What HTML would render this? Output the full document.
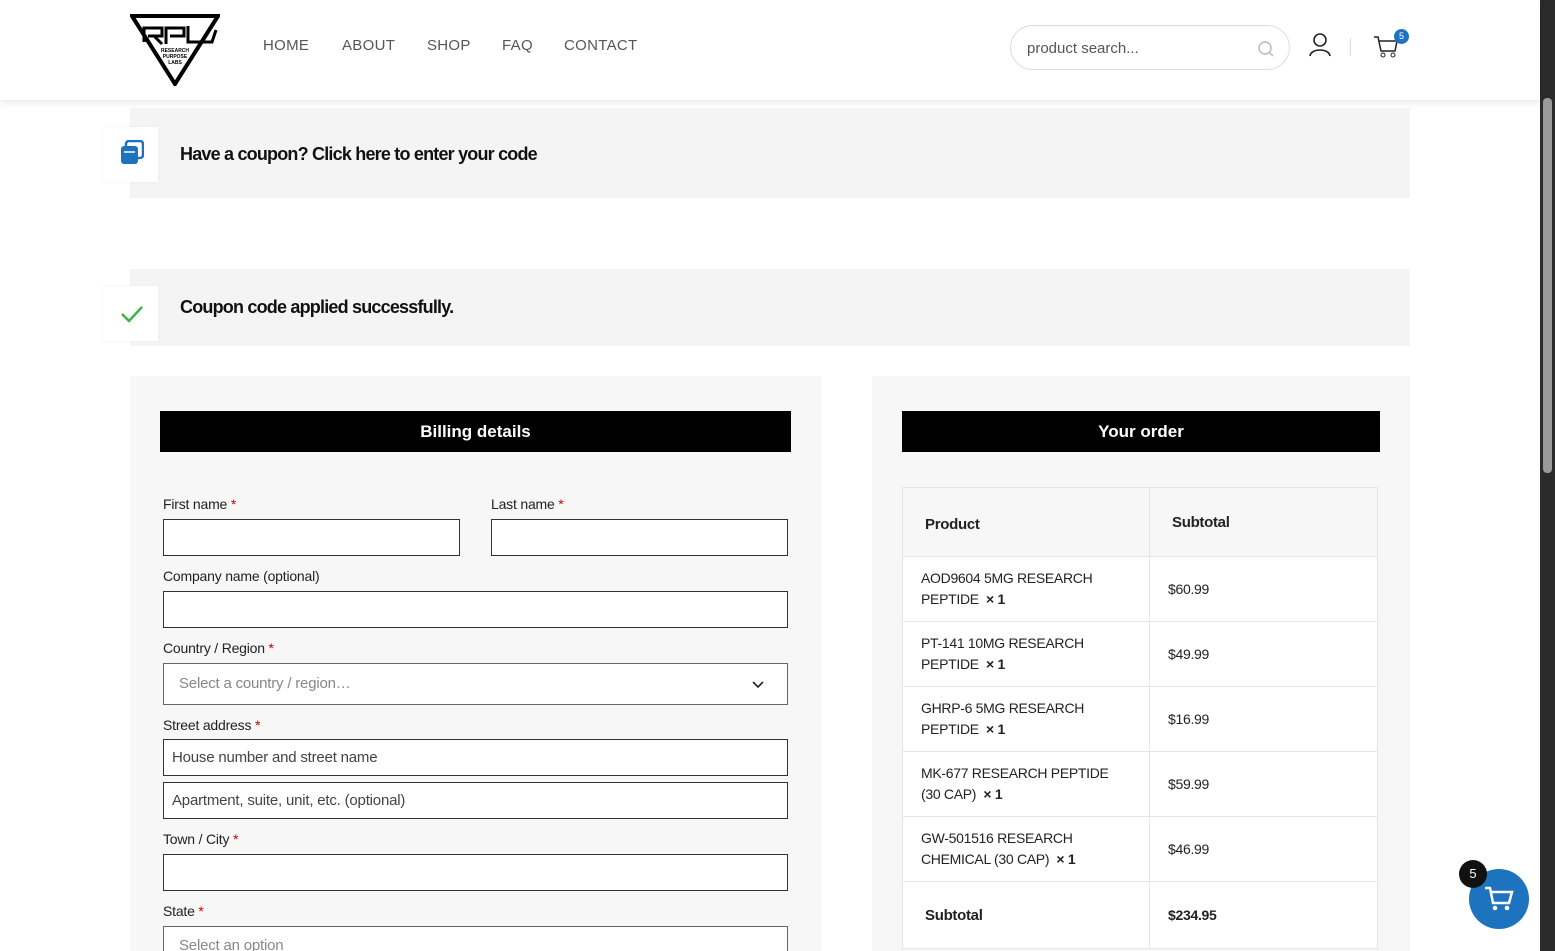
<!DOCTYPE html>
<html><head><style>
*{box-sizing:border-box;margin:0;padding:0}
html,body{width:1555px;height:951px;overflow:hidden}
body{background:#fff;font-family:"Liberation Sans",sans-serif;position:relative;color:#111}
.abs{position:absolute}
.hdr{left:0;top:0;width:1540px;height:100px;background:#fff;box-shadow:0 2px 8px rgba(0,0,0,.1);z-index:2}
.nav{top:37px;font-size:15px;color:#555;letter-spacing:.3px}
.sb{left:1540px;top:0;width:15px;height:951px;background:#2b2b2b}
.note{left:130px;width:1280px;background:#f4f4f4}
.ib{background:#fff;width:55px;height:55px;left:103px;box-shadow:0 0 3px rgba(0,0,0,.05)}
.nt{font-size:18px;font-weight:bold;letter-spacing:-.8px;color:#111}
.panel{background:#f7f7f7}
.bar{background:#000;color:#fff;font-weight:bold;font-size:17px;text-align:center;line-height:41px;height:41px}
.lab{font-size:14px;color:#222;letter-spacing:-.2px}
.lab b{color:#c00;font-weight:normal}
.inp{background:#fff;border:1px solid #333;height:37px;font-size:15px;color:#444;padding-left:8px;line-height:35px;letter-spacing:-.2px}
.tbl{left:902px;top:487px;width:476px;border:1px solid #e5e5e5;background:#fff}
.r{display:flex;border-top:1px solid #e5e5e5;height:65px;font-size:14px;color:#222;letter-spacing:-.3px}
.r div:first-child{width:247px;border-right:1px solid #e5e5e5;padding:11px 18px;line-height:21px}
.r div:last-child{padding-left:18px;display:flex;align-items:center}
</style></head><body>
<div class="abs hdr">
<svg class="abs" style="left:130px;top:14px" width="90" height="72" viewBox="0 0 90 72"><path d="M2 2H88L45 70Z" fill="none" stroke="#000" stroke-width="4"/><path d="M14 28V14H32V22H18M24 22L32 30M36 30V14H54V22H40M58 12V28H82L86 16" fill="none" stroke="#000" stroke-width="3"/><text x="45" y="38" font-size="5" text-anchor="middle" font-weight="bold">RESEARCH</text><text x="45" y="44" font-size="5" text-anchor="middle" font-weight="bold">PURPOSE</text><text x="45" y="50" font-size="5" text-anchor="middle" font-weight="bold">LABS</text></svg>
<div class="abs nav" style="left:263px">HOME</div>
<div class="abs nav" style="left:342px">ABOUT</div>
<div class="abs nav" style="left:427px">SHOP</div>
<div class="abs nav" style="left:502px">FAQ</div>
<div class="abs nav" style="left:564px">CONTACT</div>
<div class="abs" style="left:1010px;top:25px;width:280px;height:45px;border:1px solid #ddd;border-radius:23px;font-size:15px;color:#555;padding:14px 0 0 16px">product search...</div>
<svg class="abs" style="left:1257px;top:40px" width="18" height="18"><circle cx="8" cy="8" r="6" fill="none" stroke="#bbb" stroke-width="1.5"/><path d="M12 12L16 16" stroke="#bbb" stroke-width="1.5"/></svg>
<svg class="abs" style="left:1309px;top:33px" width="22" height="24"><circle cx="11" cy="7" r="6" fill="none" stroke="#222" stroke-width="1.6"/><path d="M1 23C2 15 20 15 21 23" fill="none" stroke="#222" stroke-width="1.6"/></svg>
<div class="abs" style="left:1350px;top:38px;width:1px;height:18px;background:#ddd"></div>
<svg class="abs" style="left:1373px;top:34px" width="26" height="24"><path d="M1 3H5L8 17H22L24 7H6" fill="none" stroke="#222" stroke-width="1.5"/><circle cx="10" cy="21" r="2" fill="none" stroke="#222"/><circle cx="20" cy="21" r="2" fill="none" stroke="#222"/></svg>
<div class="abs" style="left:1394px;top:29px;width:15px;height:15px;border-radius:50%;background:#1e73be;color:#fff;font-size:9px;text-align:center;line-height:15px">5</div>
</div>
<div class="abs sb"><div class="abs" style="left:3px;top:98px;width:9px;height:375px;background:#9a9a9a;border-radius:4px"></div></div>

<div class="abs note" style="top:108px;height:90px"></div>
<div class="abs ib" style="top:127px"><svg class="abs" style="left:17px;top:13px" width="24" height="26"><rect x="6" y="1" width="17" height="17" rx="3" fill="none" stroke="#1e73be" stroke-width="2.5"/><rect x="1" y="6" width="17" height="18" rx="3" fill="#1e73be"/><path d="M4 12H15" stroke="#fff" stroke-width="1.5"/></svg></div>
<div class="abs nt" style="left:180px;top:144px">Have a coupon? Click here to enter your code</div>

<div class="abs note" style="top:269px;height:77px"></div>
<div class="abs ib" style="top:286px"><svg class="abs" style="left:17px;top:18px" width="24" height="20"><path d="M2 10L9 17L22 3" fill="none" stroke="#3bb54a" stroke-width="2.5"/></svg></div>
<div class="abs nt" style="left:180px;top:297px">Coupon code applied successfully.</div>

<div class="abs panel" style="left:130px;top:376px;width:691px;height:575px"></div>
<div class="abs bar" style="left:160px;top:411px;width:631px">Billing details</div>
<div class="abs lab" style="left:163px;top:496px">First name <b>*</b></div>
<div class="abs lab" style="left:491px;top:496px">Last name <b>*</b></div>
<div class="abs inp" style="left:163px;top:519px;width:297px"></div>
<div class="abs inp" style="left:491px;top:519px;width:297px"></div>
<div class="abs lab" style="left:163px;top:568px">Company name (optional)</div>
<div class="abs inp" style="left:163px;top:591px;width:625px"></div>
<div class="abs lab" style="left:163px;top:640px">Country / Region <b>*</b></div>
<div class="abs inp" style="left:163px;top:663px;width:625px;height:42px;line-height:40px;padding-left:15px;color:#888;border-color:#666">Select a country / region…</div>
<svg class="abs" style="left:752px;top:681px" width="12" height="8"><path d="M1 1L6 6L11 1" fill="none" stroke="#222" stroke-width="1.6"/></svg>
<div class="abs lab" style="left:163px;top:717px">Street address <b>*</b></div>
<div class="abs inp" style="left:163px;top:739px;width:625px">House number and street name</div>
<div class="abs inp" style="left:163px;top:782px;width:625px">Apartment, suite, unit, etc. (optional)</div>
<div class="abs lab" style="left:163px;top:831px">Town / City <b>*</b></div>
<div class="abs inp" style="left:163px;top:854px;width:625px"></div>
<div class="abs lab" style="left:163px;top:903px">State <b>*</b></div>
<div class="abs inp" style="left:163px;top:926px;width:625px;height:25px;border-bottom:0;line-height:38px;padding-left:15px;color:#888;border-color:#666;overflow:hidden">Select an option</div>

<div class="abs panel" style="left:872px;top:376px;width:538px;height:575px"></div>
<div class="abs bar" style="left:902px;top:411px;width:478px">Your order</div>
<div class="abs tbl">
<div class="r" style="border-top:0;height:68px;background:#f7f7f7;font-weight:bold;font-size:15px"><div style="padding:26px 22px">Product</div><div style="padding-left:22px">Subtotal</div></div>
<div class="r"><div>AOD9604 5MG RESEARCH PEPTIDE &nbsp;<b>× 1</b></div><div>$60.99</div></div>
<div class="r"><div>PT-141 10MG RESEARCH PEPTIDE &nbsp;<b>× 1</b></div><div>$49.99</div></div>
<div class="r"><div>GHRP-6 5MG RESEARCH PEPTIDE &nbsp;<b>× 1</b></div><div>$16.99</div></div>
<div class="r"><div>MK-677 RESEARCH PEPTIDE (30 CAP) &nbsp;<b>× 1</b></div><div>$59.99</div></div>
<div class="r"><div>GW-501516 RESEARCH CHEMICAL (30 CAP) &nbsp;<b>× 1</b></div><div>$46.99</div></div>
<div class="r" style="height:67px;font-weight:bold"><div style="padding:23px 22px;font-size:15px">Subtotal</div><div>$234.95</div></div>
</div>

<div class="abs" style="left:1469px;top:869px;width:60px;height:60px;border-radius:50%;background:#1e73be"><svg class="abs" style="left:15px;top:16px" width="30" height="28"><path d="M1 3H6L9 18H25L28 7H7" fill="none" stroke="#fff" stroke-width="2.5"/><circle cx="11" cy="23" r="2.3" fill="#fff"/><circle cx="23" cy="23" r="2.3" fill="#fff"/></svg></div>
<div class="abs" style="left:1459px;top:860px;width:28px;height:28px;border-radius:50%;background:#111;color:#fff;font-size:13px;text-align:center;line-height:28px">5</div>
</body></html>
